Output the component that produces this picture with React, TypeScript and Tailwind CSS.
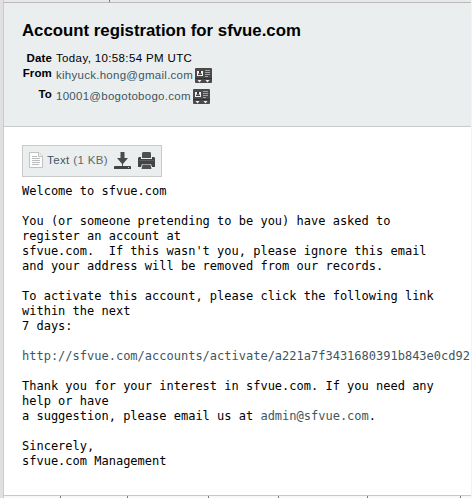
import React from "react";

function ContactIcon() {
  return (
    <svg width="17" height="15" viewBox="0 0 17 15" className="mt-px block shrink-0">
      <rect width="17" height="15" rx="1" fill="#4a4a4a" />
      <rect x="0" y="10" width="17" height="1" fill="#303030" />
      <rect x="2" y="3" width="6" height="5" fill="#f2f2f2" />
      <rect x="4" y="3" width="2" height="2" fill="#333" />
      <path d="M3 7V6l1-.8h2l1 .8v1z" fill="#444" />
      <path d="M10 2.500h5M10 4.500h5M10 6.500h5M10 8.500h3" stroke="#a2a2a2" strokeWidth="1" />
      <path d="M2.500 12h4l-2 2.500zM10.500 12h4l-2 2.500z" fill="#eee" />
    </svg>
  );
}

function PageIcon() {
  return (
    <svg width="14" height="16" viewBox="0 0 14 16" className="block shrink-0">
      <path d="M.5.5H10L13.500 4V15.500H.5z" fill="#fdfdfd" stroke="#bfc1c1" />
      <path d="M9.500.5V4.500H13.500" fill="#eee" stroke="#bfc1c1" />
      <path d="M3 4.500h5M3 6.500h8M3 8.500h8M3 10.500h8M3 12.500h7" stroke="#bcbcbc" />
    </svg>
  );
}

function DownloadIcon() {
  return (
    <svg width="17" height="17" viewBox="0 0 17 17" className="block shrink-0">
      <path d="M6.500 0h4v6H14L8.500 12.500 3 6h3.500z" fill="#4a4a4a" />
      <rect y="14" width="17" height="3" rx=".5" fill="#444" />
      <rect x="8" y="12" width="1" height="2" fill="#555" />
      <rect x="14" y="15" width="1" height="1" fill="#ccc" />
    </svg>
  );
}

function PrintIcon() {
  return (
    <svg width="17" height="17" viewBox="0 0 17 17" className="block shrink-0">
      <path d="M5 0h7l1 1v5H4V1z" fill="#505050" />
      <path d="M0 6l1-1h2v2h11V5h2l1 1v9h-3l-1-3H4l-1 3H0z" fill="#444" />
      <path d="M4.500 12.500h8l1 4.500h-10z" fill="#505050" />
      <path d="M1 8.500h15" stroke="#5c5c5c" />
    </svg>
  );
}

const topTicks = ["ml-[105px]"];
const bottomTicks = ["ml-[56px]", "ml-[66px]", "ml-[80px]", "ml-[69px]", "ml-[88px]", "ml-[92px]"];

const intro = [
  "Welcome to sfvue.com",
  "",
  "You (or someone pretending to be you) have asked to",
  "register an account at",
  "sfvue.com.  If this wasn't you, please ignore this email",
  "and your address will be removed from our records.",
  "",
  "To activate this account, please click the following link",
  "within the next",
  "7 days:",
  "",
];

const thanks = ["", "Thank you for your interest in sfvue.com. If you need any", "help or have"];

const closing = ["", "Sincerely,", "sfvue.com Management"];

function Lines({ lines }: { lines: string[] }) {
  return (
    <>
      {lines.map((line, i) => (
        <div key={i} className="h-[15px]">
          {line}
        </div>
      ))}
    </>
  );
}

export default function App() {
  return (
    <div className="flex h-[498px] w-[472px] overflow-hidden bg-white font-['Liberation_Sans',Arial,sans-serif] text-black">
      <div className="w-1 shrink-0 border-r border-[#cbcbcb] bg-[#e0e0e0]" />
      <div className="flex w-[467px] shrink-0 flex-col">
        <div className="flex h-[3px] shrink-0 border-b border-[#b9b9b9] bg-[#e9e9e9]">
          {topTicks.map((t) => (
            <i key={t} className={`${t} w-px bg-[#777]`} />
          ))}
        </div>
        <header className="h-[124px] shrink-0 border-b border-[#c9cbcb] bg-[#eaeeef] pt-[18px] pl-[18px]">
          <h1 className="text-[16.8px] leading-5 font-bold whitespace-nowrap">Account registration for sfvue.com</h1>
          <dl className="mt-[9px] grid grid-cols-[30px_1fr] gap-x-1 text-[11.5px] leading-4 whitespace-nowrap">
            <dt className="flex h-[15px] justify-end font-bold tracking-[0.15px]">Date</dt>
            <dd className="h-[15px] tracking-[0.36px]">Today, 10:58:54 PM UTC</dd>
            <dt className="flex h-[21px] justify-end font-bold tracking-[0.15px]">From</dt>
            <dd className="flex h-[21px] items-start gap-[2px] pt-[2px] tracking-[0.27px] text-[#3d5662]">
              <span>kihyuck.hong@gmail.com</span>
              <ContactIcon />
            </dd>
            <dt className="flex justify-end font-bold tracking-[0.15px]">To</dt>
            <dd className="flex items-start gap-[2px] pt-[2px] tracking-[0.27px] text-[#3d5662]">
              <span>10001@bogotobogo.com</span>
              <ContactIcon />
            </dd>
          </dl>
        </header>
        <main className="h-[368px] shrink-0 pt-[18px] pl-[18px]">
          <div className="flex h-8 w-[140px] items-center border border-[#c9cbcb] bg-[#eaeeef] pl-[6px] text-[11.5px] whitespace-nowrap">
            <div className="-mt-[3px]">
              <PageIcon />
            </div>
            <span className="-mt-px ml-[4px] w-[62px] tracking-[0.38px] text-[#3d5662]">
              Text <span className="text-[#666]">(1 KB)</span>
            </span>
            <div className="-mt-px ml-[5px] flex gap-[7px]">
              <DownloadIcon />
              <PrintIcon />
            </div>
          </div>
          <div className="mt-[7px] font-['DejaVu_Sans_Mono',monospace] text-[12px] leading-[15px] whitespace-pre">
            <Lines lines={intro} />
            <a className="block h-[15px] text-[#3d5662]">
              http://sfvue.com/accounts/activate/a221a7f3431680391b843e0cd92
            </a>
            <Lines lines={thanks} />
            <div className="flex h-[15px]">
              <span>{"a suggestion, please email us at "}</span>
              <a className="text-[#3d5662]">admin@sfvue.com</a>
              <span>.</span>
            </div>
            <Lines lines={closing} />
          </div>
        </main>
        <div className="flex h-[3px] shrink-0 border-t border-[#c9c9c9] bg-[#f8f8f8]">
          {bottomTicks.map((t) => (
            <i key={t} className={`${t} w-px bg-[#777]`} />
          ))}
        </div>
      </div>
      <div className="w-px shrink-0 bg-[#f3f3f3]" />
    </div>
  );
}
